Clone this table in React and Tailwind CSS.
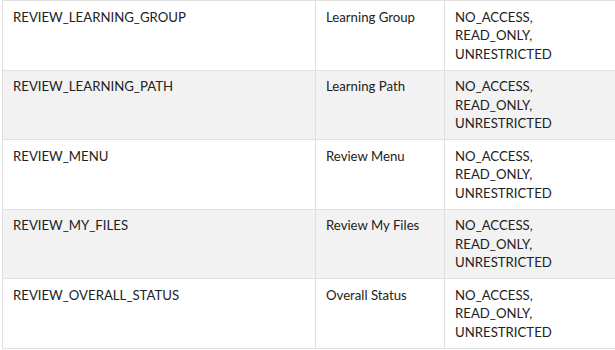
import React from 'react';

const rows = [
  { key: 'REVIEW_LEARNING_GROUP', name: 'Learning Group' },
  { key: 'REVIEW_LEARNING_PATH', name: 'Learning Path' },
  { key: 'REVIEW_MENU', name: 'Review Menu' },
  { key: 'REVIEW_MY_FILES', name: 'Review My Files' },
  { key: 'REVIEW_OVERALL_STATUS', name: 'Overall Status' },
];

const App = () => {
  return (
    <div className="w-[615px] h-[350px] overflow-hidden bg-white pl-[2px]">
      <table
        className="w-[700px] border-collapse text-[13.2px] leading-[18.5px] text-[#222]"
        style={{ fontFamily: 'Lato, "Open Sans", sans-serif' }}
      >
        <colgroup>
          <col className="w-[313px]" />
          <col className="w-[129px]" />
          <col />
        </colgroup>
        <tbody>
          {rows.map((row, i) => (
            <tr key={row.key} className={i % 2 === 1 ? 'bg-[#f2f2f2]' : 'bg-white'}>
              <td className="border border-[#e0e0e0] px-[10px] pt-[6.5px] pb-[6.5px] align-top">{row.key}</td>
              <td className="border border-[#e0e0e0] px-[10px] pt-[6.5px] pb-[6.5px] align-top">{row.name}</td>
              <td className="border border-[#e0e0e0] px-[10px] pt-[6.5px] pb-[6.5px] align-top">
                NO_ACCESS,
                <br />
                READ_ONLY,
                <br />
                UNRESTRICTED
              </td>
            </tr>
          ))}
        </tbody>
      </table>
    </div>
  );
};

export default App;
